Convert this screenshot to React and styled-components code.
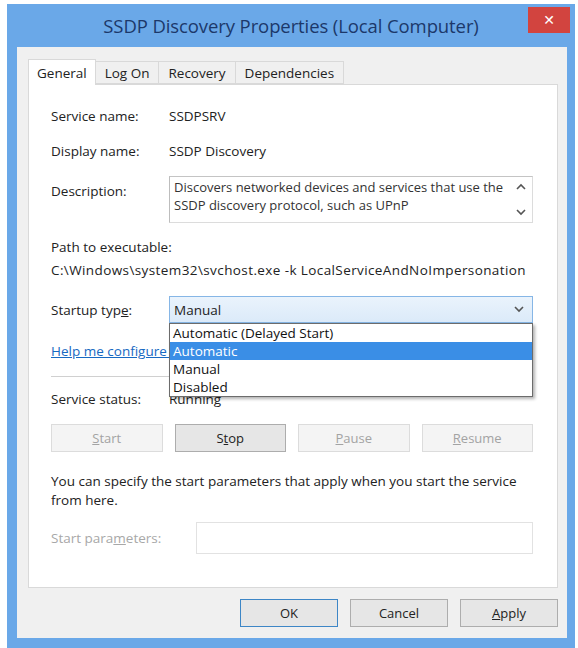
import React from 'react'
import styled, { createGlobalStyle } from 'styled-components'

const GlobalStyle = createGlobalStyle`
  html, body { margin:0; padding:0; background:#ffffff; }
  body {
    font-family: "Open Sans", "Noto Sans", sans-serif;
    font-size: 13.5px;
    color: #222;
  }
  #root { width:578px; height:648px; overflow:hidden; }
`;

const Window = styled.div`
  margin: 4px 3px 0 7px;
  height: 644px;
  background: #6aa8e8;
  display: flex;
  flex-direction: column;
  box-sizing: border-box;
  padding-bottom: 10px;
`;

const TitleBar = styled.div`
  height: 43px;
  display: grid;
  grid-template-columns: 1fr auto 1fr;
  align-items: start;
`;

const Title = styled.div`
  grid-column: 2;
  align-self: center;
  font-size: 18.5px;
  color: #1c386a;
  letter-spacing: -0.1px;
  white-space: nowrap;
`;

const Close = styled.div`
  grid-column: 3;
  justify-self: end;
  margin: 3px 5px 0 0;
  width: 42px;
  height: 26px;
  background: #d2443f;
  color: #fff;
  display: flex;
  align-items: center;
  justify-content: center;
  font-family: "DejaVu Sans", sans-serif;
  font-size: 14px;
  font-weight: bold;
`;

const Client = styled.div`
  flex: 1;
  margin: 0 8px 0 10px;
  background: #f0f0f0;
  padding: 12px 9px 0 11px;
  display: flex;
  flex-direction: column;
`;

const Tabs = styled.div`
  display: flex;
  align-items: flex-end;
  height: 25px;
  position: relative;
  z-index: 1;
`;

const Tab = styled.div`
  box-sizing: border-box;
  height: ${p => (p.$active ? '26px' : '23px')};
  margin-bottom: ${p => (p.$active ? '-1px' : '0')};
  padding: 0 ${p => (p.$active ? '8px' : '9px')};
  background: ${p => (p.$active ? '#ffffff' : '#f0f0f0')};
  border: 1px solid #d9d9d9;
  border-bottom: ${p => (p.$active ? 'none' : '1px solid #d9d9d9')};
  margin-left: ${p => (p.$first ? '0' : '-1px')};
  display: flex;
  align-items: center;
  font-size: 13.5px;
  color: #222;
`;

const Panel = styled.div`
  box-sizing: border-box;
  height: 504px;
  background: #ffffff;
  border: 1px solid #d9d9d9;
  padding: 0 24px 0 22px;
  display: flex;
  flex-direction: column;
`;

const Row = styled.div`
  margin-top: ${p => p.$top || 0}px;
  display: grid;
  grid-template-columns: ${p => p.$label || 118}px 1fr;
  align-items: ${p => (p.$alignTop ? 'start' : 'center')};
  min-height: 20px;
`;

const Label = styled.div`
  color: ${p => (p.$disabled ? '#a8a8a8' : '#222')};
  padding-top: ${p => p.$pad || 0}px;
  white-space: nowrap;
`;

const Value = styled.div`
  white-space: nowrap;
  color: #222;
`;

const Line = styled.div`
  margin-top: ${p => p.$top || 0}px;
  min-height: 20px;
  line-height: 20px;
  white-space: nowrap;
  color: #222;
  letter-spacing: ${p => p.$spacing || 0}px;
`;

const DescBox = styled.div`
  height: 47px;
  box-sizing: border-box;
  border: 1px solid #dcdcdc;
  border-top-color: #c4c4c4;
  border-left-color: #bdbdbd;
  display: flex;
`;

const DescText = styled.div`
  flex: 1;
  padding: 1px 4px;
  line-height: 18px;
  font-size: 13px;
  color: #333;
`;

const ScrollArrows = styled.div`
  width: 22px;
  display: flex;
  flex-direction: column;
  align-items: center;
  justify-content: space-between;
  padding: 6px 0 6px;
  color: #555;
`;

const SelectWrap = styled.div`
  position: relative;
`;

const Select = styled.div`
  height: 27px;
  box-sizing: border-box;
  border: 1px solid #86b6e6;
  background: linear-gradient(#eaf3fc, #dbeaf9);
  display: flex;
  align-items: center;
  justify-content: space-between;
  padding: 0 8px 0 4px;
`;

const DropList = styled.div`
  position: absolute;
  top: 27px;
  left: 0;
  right: 0;
  background: #ffffff;
  border: 1px solid #6c6c6c;
  box-shadow: 2px 2px 3px rgba(0, 0, 0, 0.3);
  z-index: 5;
`;

const Option = styled.div`
  height: 18px;
  line-height: 18px;
  padding: 0 3px;
  background: ${p => (p.$selected ? '#3a8ee6' : 'transparent')};
  color: ${p => (p.$selected ? '#ffffff' : '#111')};
`;

const HelpLink = styled.div`
  margin-top: ${p => p.$top}px;
  line-height: 20px;
  color: #1769c2;
  text-decoration: underline;
  white-space: nowrap;
`;

const Separator = styled.div`
  margin-top: ${p => p.$top}px;
  border-top: 1px solid #d0d0d0;
`;

const ButtonRow = styled.div`
  margin-top: ${p => p.$top}px;
  display: grid;
  grid-template-columns: repeat(4, 1fr);
  gap: 12px;
`;

const Button = styled.div`
  height: 28px;
  box-sizing: border-box;
  width: ${p => (p.$width ? `${p.$width}px` : 'auto')};
  border: 1px solid ${p => (p.$default ? '#3d86c6' : p.$disabled ? '#dcdcdc' : '#adadad')};
  background: ${p => (p.$disabled ? '#f4f4f4' : '#e6e6e6')};
  color: ${p => (p.$disabled ? '#a3a3a3' : '#222')};
  display: flex;
  align-items: center;
  justify-content: center;
  font-size: 13px;
`;

const Para = styled.div`
  margin-top: ${p => p.$top}px;
  line-height: 19px;
  color: #222;
`;

const Input = styled.div`
  height: 32px;
  box-sizing: border-box;
  border: 1px solid #e2e2e2;
  background: #fff;
`;

const Footer = styled.div`
  margin-top: 11px;
  display: flex;
  justify-content: flex-end;
  gap: 12px;
`;

const Chevron = ({ up }) => (
  <svg width="10" height="7" viewBox="0 0 10 7">
    <path d={up ? 'M1 6 L5 2 L9 6' : 'M1 1 L5 5 L9 1'} fill="none" stroke="#555" strokeWidth="1.6" />
  </svg>
);

export default function App() {
  return (
    <>
      <GlobalStyle />
      <Window>
        <TitleBar>
          <Title>SSDP Discovery Properties (Local Computer)</Title>
          <Close>✕</Close>
        </TitleBar>
        <Client>
          <Tabs>
            <Tab $active $first>General</Tab>
            <Tab>Log On</Tab>
            <Tab>Recovery</Tab>
            <Tab>Dependencies</Tab>
          </Tabs>
          <Panel>
            <Row $top={21}>
              <Label>Service name:</Label>
              <Value>SSDPSRV</Value>
            </Row>
            <Row $top={15}>
              <Label>Display name:</Label>
              <Value>SSDP Discovery</Value>
            </Row>
            <Row $top={15} $alignTop>
              <Label $pad={6}>Description:</Label>
              <DescBox>
                <DescText>
                  Discovers networked devices and services that use the SSDP discovery protocol, such as UPnP
                </DescText>
                <ScrollArrows>
                  <Chevron up />
                  <Chevron />
                </ScrollArrows>
              </DescBox>
            </Row>
            <Line $top={14}>Path to executable:</Line>
            <Line $top={3} $spacing={0.4}>C:\Windows\system32\svchost.exe -k LocalServiceAndNoImpersonation</Line>
            <Row $top={16}>
              <Label>
                Startup typ<u>e</u>:
              </Label>
              <SelectWrap>
                <Select>
                  <span>Manual</span>
                  <Chevron />
                </Select>
                <DropList>
                  <Option>Automatic (Delayed Start)</Option>
                  <Option $selected>Automatic</Option>
                  <Option>Manual</Option>
                  <Option>Disabled</Option>
                </DropList>
              </SelectWrap>
            </Row>
            <HelpLink $top={18}>Help me configure service startup options.</HelpLink>
            <Separator $top={15} />
            <Row $top={12}>
              <Label>Service status:</Label>
              <Value>Running</Value>
            </Row>
            <ButtonRow $top={15}>
              <Button $disabled><u>S</u>tart</Button>
              <Button>S<u>t</u>op</Button>
              <Button $disabled><u>P</u>ause</Button>
              <Button $disabled><u>R</u>esume</Button>
            </ButtonRow>
            <Para $top={20}>
              You can specify the start parameters that apply when you start the service from here.
            </Para>
            <Row $top={12} $label={145}>
              <Label $disabled>
                Start para<u>m</u>eters:
              </Label>
              <Input />
            </Row>
          </Panel>
          <Footer>
            <Button $default $width={98}>OK</Button>
            <Button $width={98}>Cancel</Button>
            <Button $width={98}><u>A</u>pply</Button>
          </Footer>
        </Client>
      </Window>
    </>
  )
}
